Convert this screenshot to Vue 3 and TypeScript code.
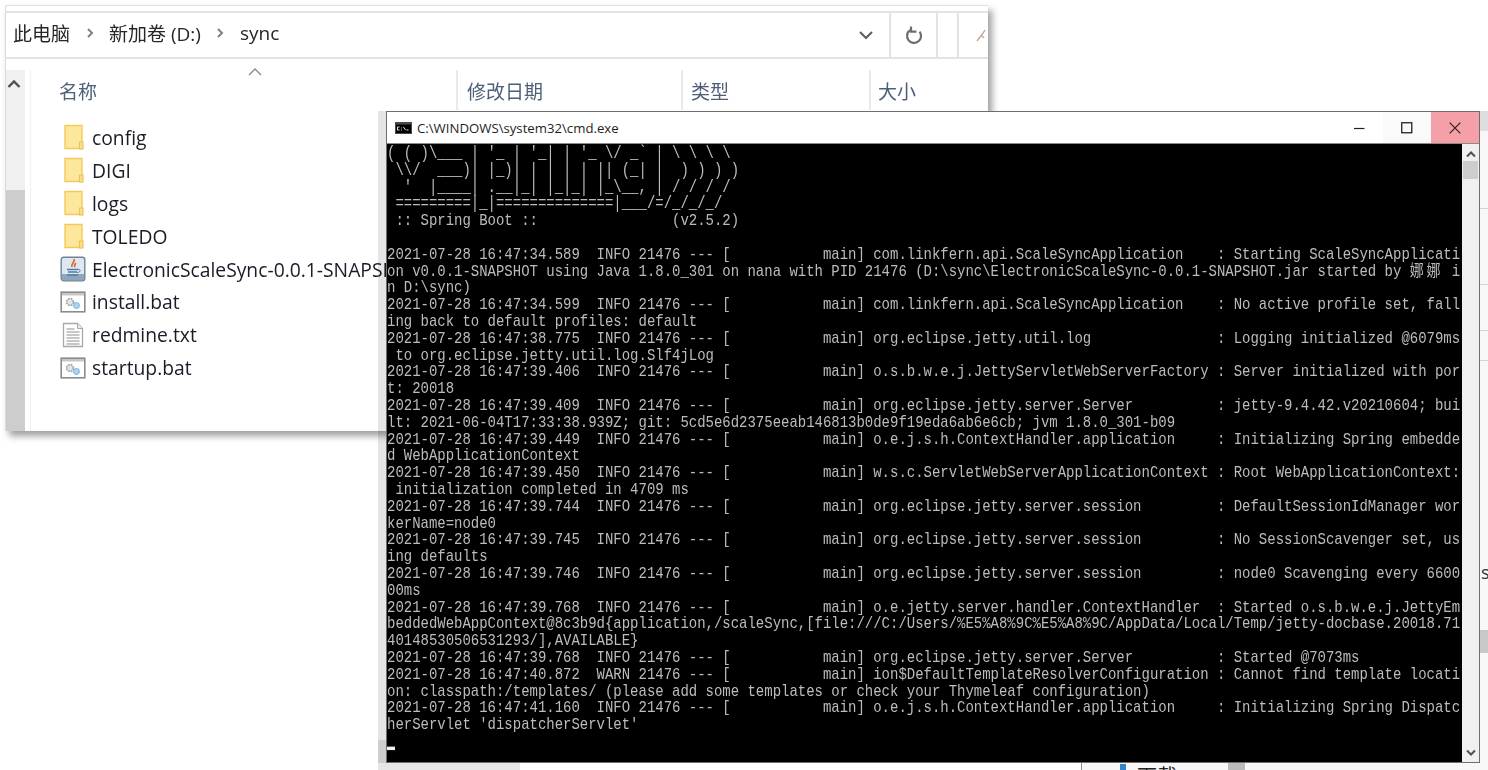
<script setup lang="ts">
const ts = (t: string, lvl = 'INFO') => `2021-07-28 16:47:${t}  ${lvl} 21476 --- [           main] `

const banner: string[] = [
  "( ( )\\___ | '_ | '_| | '_ \\/ _` | \\ \\ \\ \\",
  " \\\\/  ___)| |_)| | | | | || (_| |  ) ) ) )",
  "  '  |____| .__|_| |_|_| |_\\__, | / / / /",
  " =========|_|==============|___/=/_/_/_/",
]

const lines: string[] = [
  " :: Spring Boot ::                (v2.5.2)",
  '',
  ts('34.589') + 'com.linkfern.api.ScaleSyncApplication    : Starting ScaleSyncApplicati',
  'on v0.0.1-SNAPSHOT using Java 1.8.0_301 on nana with PID 21476 (D:\\sync\\ElectronicScaleSync-0.0.1-SNAPSHOT.jar started by 娜娜 i',
  'n D:\\sync)',
  ts('34.599') + 'com.linkfern.api.ScaleSyncApplication    : No active profile set, fall',
  'ing back to default profiles: default',
  ts('38.775') + 'org.eclipse.jetty.util.log               : Logging initialized @6079ms',
  ' to org.eclipse.jetty.util.log.Slf4jLog',
  ts('39.406') + 'o.s.b.w.e.j.JettyServletWebServerFactory : Server initialized with por',
  't: 20018',
  ts('39.409') + 'org.eclipse.jetty.server.Server          : jetty-9.4.42.v20210604; bui',
  'lt: 2021-06-04T17:33:38.939Z; git: 5cd5e6d2375eeab146813b0de9f19eda6ab6e6cb; jvm 1.8.0_301-b09',
  ts('39.449') + 'o.e.j.s.h.ContextHandler.application     : Initializing Spring embedde',
  'd WebApplicationContext',
  ts('39.450') + 'w.s.c.ServletWebServerApplicationContext : Root WebApplicationContext:',
  ' initialization completed in 4709 ms',
  ts('39.744') + 'org.eclipse.jetty.server.session         : DefaultSessionIdManager wor',
  'kerName=node0',
  ts('39.745') + 'org.eclipse.jetty.server.session         : No SessionScavenger set, us',
  'ing defaults',
  ts('39.746') + 'org.eclipse.jetty.server.session         : node0 Scavenging every 6600',
  '00ms',
  ts('39.768') + 'o.e.jetty.server.handler.ContextHandler  : Started o.s.b.w.e.j.JettyEm',
  'beddedWebAppContext@8c3b9d{application,/scaleSync,[file:///C:/Users/%E5%A8%9C%E5%A8%9C/AppData/Local/Temp/jetty-docbase.20018.71',
  '40148530506531293/],AVAILABLE}',
  ts('39.768') + 'org.eclipse.jetty.server.Server          : Started @7073ms',
  ts('40.872', 'WARN') + 'ion$DefaultTemplateResolverConfiguration : Cannot find template locati',
  'on: classpath:/templates/ (please add some templates or check your Thymeleaf configuration)',
  ts('41.160') + 'o.e.j.s.h.ContextHandler.application     : Initializing Spring Dispatc',
  "herServlet 'dispatcherServlet'",
]

const segs = (l: string) => l.split(/(娜娜)/)

const edgeLines = [97, 173, 219, 249]

type Kind = 'folder' | 'jar' | 'bat' | 'txt'
const files: { name: string; kind: Kind }[] = [
  { name: 'config', kind: 'folder' },
  { name: 'DIGI', kind: 'folder' },
  { name: 'logs', kind: 'folder' },
  { name: 'TOLEDO', kind: 'folder' },
  { name: 'ElectronicScaleSync-0.0.1-SNAPSHOT.jar', kind: 'jar' },
  { name: 'install.bat', kind: 'bat' },
  { name: 'redmine.txt', kind: 'txt' },
  { name: 'startup.bat', kind: 'bat' },
]
</script>

<template>
  <div class="desk">
    <div class="back">
      <span class="back-top"></span>
      <span v-for="y in edgeLines" :key="y" class="back-line" :style="{ top: y + 'px' }"></span>
      <span class="back-s">s</span>
      <span class="back-bar"></span>
      <span class="back-thumb"></span>
      <span class="back-blue"></span>
      <span class="back-text">下载</span>
    </div>
    <div class="back-left"></div>

    <section class="explorer">
      <header class="addr">
        <div class="crumbs">
          <span>此电脑</span>
          <svg class="sep" width="10" height="14" viewBox="0 0 10 14"><path d="M3 3l4 4-4 4" fill="none" stroke="#808080" stroke-width="2" /></svg>
          <span>新加卷 (D:)</span>
          <svg class="sep" width="10" height="14" viewBox="0 0 10 14"><path d="M3 3l4 4-4 4" fill="none" stroke="#808080" stroke-width="2" /></svg>
          <span>sync</span>
        </div>
        <svg class="drop" width="16" height="10" viewBox="0 0 16 10"><path d="M2 2l6 6 6-6" fill="none" stroke="#606060" stroke-width="2.2" /></svg>
        <div class="refresh">
          <svg width="18" height="20" viewBox="0 0 18 20"><path d="M14.6 6.6A7 7 0 1 1 5 5.2M6 1.4v5.2h5.4" fill="none" stroke="#6e6e6e" stroke-width="2.2" /></svg>
        </div>
        <div class="search">
          <svg width="10" height="18" viewBox="0 0 10 18"><path d="M9 4C7 8 4 11 1 15" fill="none" stroke="#c9a78c" stroke-width="1.4" /><path d="M5 9l3 3" stroke="#b9a6c8" stroke-width="1.4" /></svg>
        </div>
      </header>
      <div class="pane">
        <div class="vscroll">
          <svg class="up" width="14" height="10" viewBox="0 0 14 10"><path d="M1.5 8l5.5-5.5L12.5 8" fill="none" stroke="#505050" stroke-width="2.4" /></svg>
          <div class="vthumb"></div>
        </div>
        <div class="list">
          <svg class="sort" width="14" height="8" viewBox="0 0 14 8"><path d="M1 7l6-6 6 6" fill="none" stroke="#8a8a8a" stroke-width="1.4" /></svg>
          <div class="cols">
            <div class="col c1">名称</div>
            <div class="col c2">修改日期</div>
            <div class="col c3">类型</div>
            <div class="col c4">大小</div>
          </div>
          <ul class="rows">
            <li v-for="f in files" :key="f.name" class="row">
              <svg v-if="f.kind === 'folder'" class="ficon" width="26" height="26" viewBox="0 0 26 26">
                <path d="M5 1.5h17v23H5z" fill="#fce79d" stroke="#f2ca5c" stroke-width="1.4" />
                <path d="M19.5 18h3.5v7h-3.5z" fill="#fbe08a" stroke="#eec254" stroke-width="1.2" />
              </svg>
              <svg v-else-if="f.kind === 'jar'" class="ficon" width="26" height="26" viewBox="0 0 26 26">
                <rect x="1.2" y="1.2" width="23.6" height="23.6" rx="2.5" fill="#dfe7ef" stroke="#6f8597" stroke-width="1.4" />
                <path d="M1.8 18h22.4v4.5a2 2 0 0 1-2 2H3.8a2 2 0 0 1-2-2z" fill="#8fa6ba" />
                <path d="M14 3c1.5 3-3.5 4.5-2 8M16 7c-1.5 1.600-2 2.600-1 4" fill="none" stroke="#e0622a" stroke-width="1.6" />
                <path d="M7 13.500h11M8 16h9M7 19h11" fill="none" stroke="#4d7fa8" stroke-width="1.3" />
                <path d="M18 13.500c3-.5 3 3-1 3" fill="none" stroke="#4d7fa8" stroke-width="1" />
              </svg>
              <svg v-else-if="f.kind === 'bat'" class="ficon" width="26" height="26" viewBox="0 0 26 26">
                <rect x="1.2" y="3.2" width="23.600" height="19.600" fill="#fff" stroke="#8c8c8c" stroke-width="1.6" />
                <path d="M2 4h22v2.500H2z" fill="#c6c6c6" />
                <circle cx="10" cy="13" r="3.400" fill="#e4e4e4" stroke="#a8a8a8" stroke-width="1.800" stroke-dasharray="1.800 .9" />
                <circle cx="16.500" cy="16.500" r="3" fill="#a9d3f0" stroke="#7db7e0" stroke-width="1" />
              </svg>
              <svg v-else class="ficon" width="26" height="26" viewBox="0 0 26 26">
                <path d="M3.500 1.500h14l5 5v18h-19z" fill="#fff" stroke="#a8a8a8" stroke-width="1.300" />
                <path d="M17.500 1.500v5h5" fill="#eee" stroke="#a8a8a8" stroke-width="1" />
                <path d="M6.500 7h8M6.500 10h13M6.500 13h13M6.500 16h13M6.500 19h13M6.500 22h13" stroke="#8f8f8f" stroke-width="1.200" />
              </svg>
              <span class="fname">{{ f.name }}</span>
            </li>
          </ul>
        </div>
      </div>
    </section>

    <section class="cmd">
      <header class="tbar">
        <svg class="cicon" width="17" height="12" viewBox="0 0 17 12">
          <rect width="17" height="12" fill="#4a4a4a" />
          <rect x="1" y="2.500" width="15" height="8.500" fill="#000" />
          <path d="M2.500 5h2M2.500 5v3h2M6 6h.8M6 8h.8M8.500 5l2 3M11.500 8h2" stroke="#e0e0e0" stroke-width="1" fill="none" />
        </svg>
        <span class="ttext">C:\WINDOWS\system32\cmd.exe</span>
        <div class="wbtn">
          <svg width="12" height="12" viewBox="0 0 12 12"><path d="M1 6.500h10.500" stroke="#222" stroke-width="1.200" /></svg>
        </div>
        <div class="wbtn maxb">
          <svg width="12" height="12" viewBox="0 0 12 12"><rect x=".75" y=".75" width="10" height="10" fill="none" stroke="#222" stroke-width="1.300" /></svg>
        </div>
        <div class="wbtn closeb">
          <svg width="12" height="12" viewBox="0 0 12 12"><path d="M.7.700l10.600 10.600M11.300.7L.7 11.300" stroke="#2a2122" stroke-width="1.200" /></svg>
        </div>
      </header>
      <div class="cbody">
        <div class="term">
          <pre class="log"><div v-for="(l, i) in banner" :key="'b' + i" class="ln ban">{{ l }}</div><div v-for="(l, i) in lines" :key="i" class="ln"><template v-for="(s, j) in segs(l)" :key="j"><span v-if="s === '娜娜'" class="wide">{{ s }}</span><template v-else>{{ s }}</template></template></div><div class="ln"><i class="cursor"></i></div></pre>
        </div>
        <aside class="cscroll">
          <svg width="12" height="8" viewBox="0 0 12 8"><path d="M2 6.500l4-4 4 4" fill="none" stroke="#505050" stroke-width="2" /></svg>
          <div class="cthumb"></div>
          <svg class="dn" width="12" height="8" viewBox="0 0 12 8"><path d="M2 1.500l4 4 4-4" fill="none" stroke="#505050" stroke-width="2" /></svg>
        </aside>
      </div>
    </section>
  </div>
</template>

<style>
html, body { margin: 0; background: #fff; overflow: hidden; }
</style>

<style scoped>
.desk {
  position: relative;
  width: 1488px;
  height: 770px;
  overflow: hidden;
  background: #fff;
  font-family: "Open Sans", "Noto Sans CJK SC", sans-serif;
}

/* window hidden behind the other two */
.back {
  position: absolute;
  left: 1081px;
  top: 111px;
  right: 0;
  bottom: 0;
  background: #f8f8f8;
  border-left: 1px solid #8f8f8f;
}
.back-top { position: absolute; left: 0; right: 0; top: 0; height: 20px; background: #dedede; }
.back-line { position: absolute; left: 0; right: 0; height: 1px; background: #d4d4d4; }
.back-s { position: absolute; left: 399px; top: 449px; font-size: 18px; color: #333; line-height: 24px; }
.back-bar { position: absolute; left: 398px; right: 0; top: 519px; height: 23px; background: #c8c8c8; }
.back-thumb { position: absolute; left: 146px; top: 651px; width: 17px; height: 8px; background: #bcbcbc; }
.back-blue { position: absolute; left: 38px; top: 653px; width: 6px; height: 6px; background: #2f86cf; }
.back-text { position: absolute; left: 55px; top: 654px; font-size: 20px; line-height: 24px; color: #222; }
.back-left {
  position: absolute;
  left: 378px;
  width: 142px;
  top: 740px;
  bottom: 0;
  background: #e6e6e6;
}

/* Explorer */
.explorer {
  position: absolute;
  left: 5px;
  top: 5px;
  width: 983px;
  height: 426px;
  display: flex;
  flex-direction: column;
  background: #fff;
  border-top: 1px solid #e2e2e2;
  border-left: 1px solid #dcdcdc;
  box-sizing: border-box;
  box-shadow: 4px 5px 7px rgba(0, 0, 0, .38);
}
.addr {
  margin-top: 5px;
  flex: none;
  display: flex;
  align-items: center;
  border-top: 2px solid #e3e3e3;
  border-bottom: 2px solid #e3e3e3;
  box-sizing: border-box;
  height: 48px;
  filter: blur(.35px);
}
.crumbs {
  display: flex;
  align-items: center;
  gap: 14.500px;
  margin-left: 7px;
  margin-top: -4px;
  font-size: 19px;
  color: #262626;
  flex: 1;
}
.drop { margin-right: 15px; }
.refresh {
  width: 49px;
  height: 100%;
  box-sizing: border-box;
  border-left: 2px solid #e3e3e3;
  border-right: 2px solid #e3e3e3;
  display: flex;
  align-items: center;
  justify-content: center;
}
.search {
  width: 31px;
  height: 100%;
  margin-left: 19px;
  box-sizing: border-box;
  border-left: 2px solid #e3e3e3;
  display: flex;
  align-items: center;
  justify-content: flex-end;
  padding-right: 2px;
}
.pane { flex: 1; display: flex; min-height: 0; padding-top: 11px; box-sizing: border-box; }
.vscroll {
  width: 19px;
  flex: none;
  background: #f0f0f0;
  display: flex;
  flex-direction: column;
  align-items: center;
}
.up { margin-top: 9px; margin-left: -3px; }
.vthumb { margin-top: auto; width: 100%; height: 241px; background: #cdcdcd; }
.list {
  position: relative;
  flex: 1;
  margin-left: 5px;
  border-left: 1px solid #eef0f2;
  min-width: 0;
}
.sort { position: absolute; left: 217px; top: -2px; }
.cols { display: flex; height: 40px; filter: blur(.35px); }
.col {
  font-size: 19px;
  line-height: 44px;
  color: #4d6078;
  box-sizing: border-box;
  padding-left: 9px;
  border-right: 2px solid #eaeaea;
}
.c1 { width: 427px; padding-left: 28px; }
.c2 { width: 225px; }
.c3 { width: 188px; padding-left: 8px; }
.c4 { flex: 1; border-right: 0; padding-left: 7px; }
.rows { list-style: none; margin: 11px 0 0; padding: 0; filter: blur(.35px); }
.row { display: flex; align-items: center; height: 32.9px; padding-left: 29px; }
.ficon { flex: none; }
.fname { margin-left: 6px; font-size: 19.300px; color: #1c1c28; white-space: nowrap; }

/* Console */
.cmd {
  position: absolute;
  left: 386px;
  top: 111px;
  width: 1094px;
  height: 652px;
  box-sizing: border-box;
  display: flex;
  flex-direction: column;
  background: #fff;
  border: 1px solid #6e6e6e;
  box-shadow: -8px 0 0 rgba(0, 0, 0, .1);
}
.tbar { height: 31px; flex: none; display: flex; align-items: center; border-bottom: 1px solid #8a8a8a; box-sizing: content-box; }
.cicon { margin-left: 8px; }
.ttext { margin-left: 5px; flex: 1; font-size: 13.200px; color: #1e1e1e; font-family: "Open Sans", sans-serif; }
.wbtn { width: 48px; height: 100%; display: flex; align-items: center; justify-content: center; }
.maxb { background: #fafafa; }
.closeb { background: #f59fa8; }
.cbody { flex: 1; display: flex; min-height: 0; }
.term { flex: 1; background: #000; overflow: hidden; min-width: 0; }
.log {
  margin: 1px 0 0 0;
  color: #bcbcbc;
  font-family: "Liberation Mono", "Noto Sans CJK SC", monospace;
  font-size: 14px;
  letter-spacing: -.018px;
  filter: blur(.3px);
}
.ln { height: 16.800px; line-height: 16.800px; white-space: pre; transform: scaleY(1.14); }
.ban { transform: scaleY(1.35); }
.wide { letter-spacing: 2.780px; font-size: 14px; }
.cursor { display: block; width: 8px; height: 3px; margin-top: 0; background: #f2f2f2; transform: translateY(13px); }
.cscroll {
  width: 17px;
  flex: none;
  background: #f0f0f0;
  display: flex;
  flex-direction: column;
  align-items: center;
  padding-top: 6px;
  padding-bottom: 5px;
  box-sizing: border-box;
}
.cthumb { width: 15px; height: 18px; margin-top: 3px; background: #cdcdcd; }
.dn { margin-top: auto; }
</style>
